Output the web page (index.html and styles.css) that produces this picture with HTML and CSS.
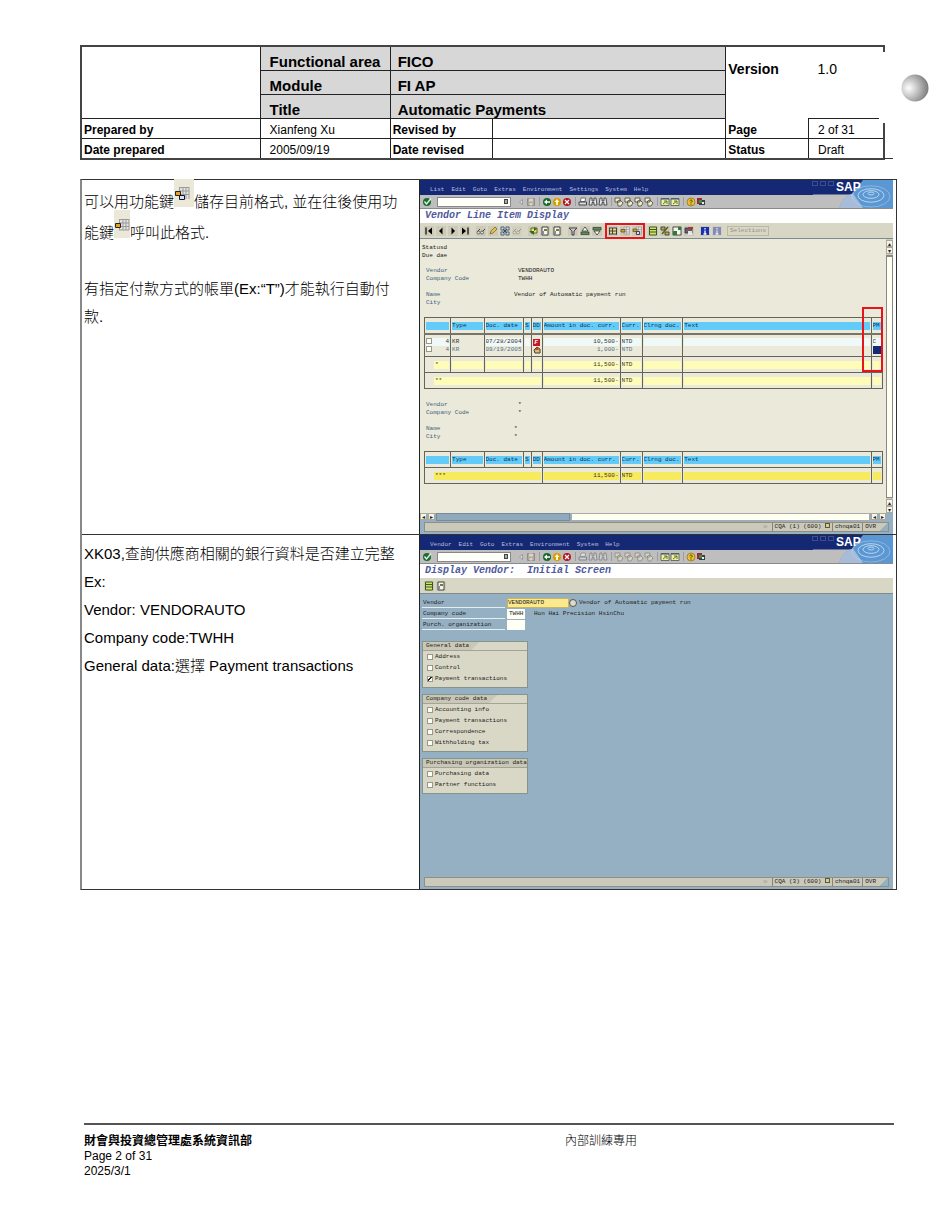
FILE: index.html
```html
<!DOCTYPE html>
<html lang="zh-Hant">
<head>
<meta charset="utf-8">
<title>FI AP Automatic Payments</title>
<link rel="stylesheet" href="styles.css">
</head>
<body>
<svg class="defs" aria-hidden="true">
  <symbol id="ok" viewBox="0 0 10 10"><circle cx="5" cy="5" r="4" fill="#1d6b34"/><path d="M2.5 4.5L4.5 7L9 1.5" stroke="#e8f6e8" stroke-width="1.3" fill="none"/></symbol>
  <symbol id="tri" viewBox="0 0 10 10"><path d="M6.5 2.5v5L3.5 5z" fill="#ddd" stroke="#8a8a8a" stroke-width=".7"/></symbol>
  <symbol id="save" viewBox="0 0 10 10"><path d="M1.5 1.5h7v7h-7z" fill="#b0a89c" stroke="#958d80"/><path d="M3 1.5h4v3H3zM3.5 6h3v2.5h-3z" fill="#d8d4cc"/></symbol>
  <symbol id="back" viewBox="0 0 10 10"><circle cx="5" cy="5" r="4" fill="#176a2b"/><path d="M2 5l3-2.5v1.7h3v1.6H5v1.7z" fill="#fff"/></symbol>
  <symbol id="exit" viewBox="0 0 10 10"><circle cx="5" cy="5" r="4" fill="#d99b00"/><path d="M5 2l2.5 3H6v3H4V5H2.5z" fill="#fff8c8"/></symbol>
  <symbol id="cancel" viewBox="0 0 10 10"><circle cx="5" cy="5" r="4" fill="#b51222"/><path d="M3 3l4 4M7 3L3 7" stroke="#fff" stroke-width="1.3"/></symbol>
  <symbol id="print" viewBox="0 0 10 10"><path d="M3 1h4.5L7 4.500H2.500z" fill="#fff" stroke="currentColor" stroke-width=".7"/><path d="M1 5h7.500v3H1z" fill="#ddd" stroke="currentColor"/></symbol>
  <symbol id="find" viewBox="0 0 10 10"><path d="M2 1h2v3h2V1h2l1 7H6V5.500H4V8H1z" fill="#e5e5ee" stroke="currentColor" stroke-width=".9"/></symbol>
  <symbol id="page" viewBox="0 0 10 10"><path d="M1 1h5v4H1zM3.500 4L6 3l3 3-2 3H4z" fill="#f3edc4" stroke="currentColor" stroke-width=".8"/></symbol>
  <symbol id="sess" viewBox="0 0 10 10"><path d="M1 1.500h8v7H1z" fill="#f2eda0" stroke="#4a5a50" stroke-width=".8"/><path d="M1 2h8" stroke="#31517c"/><path d="M3 7l4-3M4 4h3v3" stroke="#5c7a2c" fill="none"/></symbol>
  <symbol id="help" viewBox="0 0 10 10"><circle cx="5" cy="5" r="4" fill="#e8c233" stroke="#8c6b10" stroke-width=".7"/><path d="M3.500 4Q5 1.500 6.500 4L5 5.500v1M5 7.300v.8" stroke="#5b430c" fill="none"/></symbol>
  <symbol id="local" viewBox="0 0 10 10"><path d="M1 1h5v6H1z" fill="#a32638"/><path d="M3 3h6v5H3z" fill="#32434a"/><path d="M3 3h3v3H3z" fill="#3c9140"/><path d="M6 5h2v2H6z" fill="#eee"/></symbol>
  <symbol id="first" viewBox="0 0 10 10"><path d="M2 1.500v7" stroke="#111" stroke-width="1.300"/><path d="M8 1.500v7L4 5z"/></symbol>
  <symbol id="prev" viewBox="0 0 10 10"><path d="M6.500 1.500v7L3 5z"/></symbol>
  <symbol id="next" viewBox="0 0 10 10"><path d="M3.500 1.500v7L7 5z"/></symbol>
  <symbol id="last" viewBox="0 0 10 10"><path d="M8 1.500v7" stroke="#111" stroke-width="1.300"/><path d="M2 1.500v7L6 5z"/></symbol>
  <symbol id="glass" viewBox="0 0 10 10"><path d="M1 6l3-3M5 7l4-4" stroke="#444"/><circle cx="2.500" cy="6.500" r="1.500" fill="#ddd" stroke="#444" stroke-width=".7"/><circle cx="6" cy="6.500" r="1.500" fill="#ddd" stroke="#444" stroke-width=".7"/></symbol>
  <symbol id="pen" viewBox="0 0 10 10"><path d="M2 8l1-3 4-4 2 2-4 4z" fill="#e3c24b" stroke="#6a5a2a" stroke-width=".7"/></symbol>
  <symbol id="cross" viewBox="0 0 10 10"><path d="M1 1h3v3H1zM6 1h3v3H6zM1 6h3v3H1zM6 6h3v3H6z" fill="#c9d8e6" stroke="#35506b" stroke-width=".8"/><path d="M3 3l4 4M7 3L3 7" stroke="#35506b"/></symbol>
  <symbol id="grid" viewBox="0 0 10 10"><path d="M1 2h8v6H1z" fill="#e5dc8a"/><path d="M1 2h8M1 5h8M1 8h8M1.500 2v6.500M4.500 2v6M8.500 2v6.500" stroke="#333" stroke-width=".9"/></symbol>
  <symbol id="swap" viewBox="0 0 10 10"><path d="M3 2h6v5H3z" fill="#f1e05f" stroke="#4b4b20" stroke-width=".8"/><path d="M1 5h5v4z" fill="#256d31"/><path d="M6 1l3 2-3 2z" fill="#256d31"/></symbol>
  <symbol id="doc" viewBox="0 0 10 10"><path d="M2 1h6v8H2z" fill="#f6f6ec" stroke="#333" stroke-width=".9"/><path d="M4 3h3v2H4z" fill="#6d7d3b"/><path d="M1 5h3v3H1z" fill="#889"/></symbol>
  <symbol id="filter" viewBox="0 0 10 10"><path d="M1 2h8L6 5v4H4V5z" fill="#c8ccd0" stroke="#333" stroke-width=".9"/></symbol>
  <symbol id="asc" viewBox="0 0 10 10"><path d="M5 1l3 4H2z" fill="#fff" stroke="#333" stroke-width=".8"/><path d="M1 6h8v2.500H1z" fill="#529658" stroke="#333" stroke-width=".7"/></symbol>
  <symbol id="desc" viewBox="0 0 10 10"><path d="M1 1.500h8V4H1z" fill="#529658" stroke="#333" stroke-width=".7"/><path d="M2 5h6L5 9z" fill="#fff" stroke="#333" stroke-width=".8"/></symbol>
  <symbol id="lay" viewBox="0 0 10 10"><path d="M4 1h5.500v7H4zM4 3.500h5.500M4 6h5.500M6.500 1v7" fill="#e6e6e0" stroke="#999" stroke-width=".7"/><path d="M1 3.500h4v2.500H1z" fill="#dca02a" stroke="#3a3013" stroke-width=".6"/></symbol>
  <symbol id="laysave" viewBox="0 0 10 10"><path d="M4 1h5.500v7H4zM4 3.500h5.500M4 6h5.500M6.500 1v7" fill="#e6e6e0" stroke="#999" stroke-width=".7"/><path d="M1 3h4v2.500H1z" fill="#dca02a" stroke="#3a3013" stroke-width=".6"/><path d="M4.500 5.500h3v3h-3z" fill="#dde" stroke="#223" stroke-width=".8"/></symbol>
  <symbol id="sheet" viewBox="0 0 10 10"><path d="M1.500 1h7v8h-7z" fill="#cfe06a" stroke="#3c5a24"/><path d="M2 3.500h6M2 6h6" stroke="#3c5a24" stroke-width="1.200"/></symbol>
  <symbol id="link" viewBox="0 0 10 10"><path d="M1 1h4v3H1zM5 6h4v3H5z" fill="#c9a730" stroke="#333" stroke-width=".8"/><path d="M8 1L2 8" stroke="#46682f" stroke-width="1.500"/></symbol>
  <symbol id="xls" viewBox="0 0 10 10"><path d="M1 1h8v8H1z" fill="#f5f5f0" stroke="#333" stroke-width=".8"/><path d="M1 5h4v4H1zM6 1h3v3H6z" fill="#2d7a3c"/></symbol>
  <symbol id="mail" viewBox="0 0 10 10"><path d="M1 2h7v5H1z" fill="#665a78" stroke="#333" stroke-width=".8"/><path d="M4 5h4v4H4z" fill="#e6e6e6"/><path d="M4 1h5v2H4z" fill="#a33"/></symbol>
  <symbol id="info" viewBox="0 0 10 10"><path d="M1 1h8v8H1z" fill="currentColor"/><path d="M5 2v1.500M5 4.500V8M3.500 8h3" stroke="#fff" stroke-width="1.300"/></symbol>
  <symbol id="sap" viewBox="0 0 80 29" preserveAspectRatio="none"><path d="M0 15h60v14H0z" fill="#bebebe"/><path d="M26 29Q30 17 38 15L50 0h30v29z" fill="#5b97d2"/><path d="M26 29Q30 16 40 14L50 29z" fill="#b9c5da" opacity=".8"/><g fill="none" stroke="#c1dcf2" stroke-width=".9"><ellipse cx="58" cy="14" rx="3" ry="1.500"/><ellipse cx="58" cy="15" rx="8" ry="4"/><ellipse cx="58" cy="16" rx="13" ry="7"/><ellipse cx="58" cy="17" rx="19" ry="11" opacity=".5"/></g></symbol>
</svg>

<div class="page">
  <header class="head">
    <table class="info">
      <colgroup><col class="h1"><col class="h2"><col class="h3"><col class="h4"><col class="h5"><col class="h6"></colgroup>
      <tr><td rowspan="3"></td><th class="big key">Functional area</th><th class="big" colspan="2">FICO</th><th class="ver open" rowspan="3">Version</th><td class="ver pad open" rowspan="3">1.0</td></tr>
      <tr><th class="big key">Module</th><th class="big" colspan="2">FI AP</th></tr>
      <tr><th class="big key">Title</th><th class="big" colspan="2">Automatic Payments</th></tr>
      <tr><th>Prepared by</th><td class="pad">Xianfeng Xu</td><th>Revised by</th><td></td><th class="pg">Page</th><td class="pad">2 of 31</td></tr>
      <tr><th>Date prepared</th><td class="pad">2005/09/19</td><th>Date revised</th><td></td><th>Status</th><td class="pad">Draft</td></tr>
    </table>
    <div class="ballbox"><svg class="ball" viewBox="0 0 28 28"><defs><radialGradient id="bg" cx=".27" cy=".5" r=".75"><stop offset="0" stop-color="#fff"/><stop offset=".35" stop-color="#d0d0d0"/><stop offset="1" stop-color="#777"/></radialGradient></defs><circle cx="14" cy="14" r="13.500" fill="url(#bg)"/></svg></div>
  </header>

  <main>
    <section class="step">
      <div class="note">
        <p>可以用功能鍵<svg class="ic wide" viewBox="0 0 20 28"><path d="M0 0h20v28H0z" fill="#ebe8d8"/><path d="M5 8h10v12H5z" fill="#e4e4e4"/><path d="M5 8.500h10M5 12h10M5 15.500h10M5.500 8v10M9 8v12M12 8v12M15 8v12" stroke="#999"/><path d="M1.500 12.500h5v4h-5z" fill="#e5a020" stroke="#222"/><path d="M5.500 16.500h5v4h-5z" fill="#dde2f5" stroke="#113"/></svg>儲存目前格式, 並在往後使用功<br>能鍵<svg class="ic" viewBox="0 0 16 28"><path d="M0 0h16v28H0z" fill="#ebe8d8"/><path d="M5 9h10v11H5z" fill="#e4e4e4"/><path d="M5 9.500h10M5 13h10M5 16.500h10M5 20h10M5.500 9v11M9 9v11M12 9v11M15 9v11" stroke="#999"/><path d="M1.500 13.500h5v4h-5z" fill="#e5a020" stroke="#222"/></svg>呼叫此格式.</p>
        <p class="blank"></p>
        <p>有指定付款方式的帳單(Ex:“T”)才能執行自動付<br>款.</p>
      </div>
      <div class="shot">
        <div class="menu"><span>List</span><span>Edit</span><span>Goto</span><span>Extras</span><span>Environment</span><span>Settings</span><span>System</span><span>Help</span></div>
        <div class="brand"><svg><use href="#sap"/></svg><b>SAP</b></div><div class="winbtn"><i></i><i></i><i></i></div>
        <div class="std">
          <button aria-label="Enter"><svg><use href="#ok"/></svg></button><span class="cmd"><input aria-label="Command"><i></i></span>
          <button aria-label="Collapse"><svg><use href="#tri"/></svg></button><button aria-label="Save"><svg><use href="#save"/></svg></button><i class="sep"></i>
          <button aria-label="Back"><svg><use href="#back"/></svg></button><button aria-label="Exit"><svg><use href="#exit"/></svg></button><button aria-label="Cancel"><svg><use href="#cancel"/></svg></button><i class="sep"></i>
          <button aria-label="Print"><svg><use href="#print"/></svg></button><button aria-label="Find"><svg><use href="#find"/></svg></button><button aria-label="Find next"><svg><use href="#find"/></svg></button><i class="sep"></i>
          <button aria-label="First page"><svg><use href="#page"/></svg></button><button aria-label="Previous page"><svg><use href="#page"/></svg></button><button aria-label="Next page"><svg><use href="#page"/></svg></button><button aria-label="Last page"><svg><use href="#page"/></svg></button><i class="sep"></i>
          <button aria-label="New session"><svg><use href="#sess"/></svg></button><button aria-label="Shortcut"><svg><use href="#sess"/></svg></button><i class="sep"></i>
          <button aria-label="Help"><svg><use href="#help"/></svg></button><button aria-label="Layout"><svg><use href="#local"/></svg></button>
        </div>
        <h2>Vendor Line Item Display</h2>
        <div class="app">
          <span class="grp"><button aria-label="First"><svg><use href="#first"/></svg></button><button aria-label="Previous"><svg><use href="#prev"/></svg></button><button aria-label="Next"><svg><use href="#next"/></svg></button><button aria-label="Last"><svg><use href="#last"/></svg></button></span>
          <span class="grp"><button aria-label="Display"><svg><use href="#glass"/></svg></button><button aria-label="Change"><svg><use href="#pen"/></svg></button><button aria-label="Mass change"><svg><use href="#cross"/></svg></button><button class="dim" aria-label="Check"><svg><use href="#glass"/></svg></button></span>
          <span class="grp"><button aria-label="Switch"><svg><use href="#swap"/></svg></button><button aria-label="Document"><svg><use href="#doc"/></svg></button><button aria-label="Additional"><svg><use href="#doc"/></svg></button></span>
          <span class="grp"><button aria-label="Filter"><svg><use href="#filter"/></svg></button><button aria-label="Ascending"><svg><use href="#asc"/></svg></button><button aria-label="Descending"><svg><use href="#desc"/></svg></button></span>
          <span class="grp mark"><button aria-label="Change layout"><svg><use href="#grid"/></svg></button><button aria-label="Select layout"><svg><use href="#lay"/></svg></button><button aria-label="Save layout"><svg><use href="#laysave"/></svg></button></span>
          <span class="grp"><button aria-label="Sum"><svg><use href="#sheet"/></svg></button><button aria-label="Subtotal"><svg><use href="#link"/></svg></button><button aria-label="Spreadsheet"><svg><use href="#xls"/></svg></button><button aria-label="Mail"><svg><use href="#mail"/></svg></button></span>
          <span class="grp blue"><button aria-label="Info"><svg><use href="#info"/></svg></button><button class="dim" aria-label="Legend"><svg><use href="#info"/></svg></button></span>
          <button class="sel">Selections</button>
        </div>
        <div class="work">
          <div class="report">
            <p>Statusd<br>Due dae</p>
            <dl><dt>Vendor</dt><dd>VENDORAUTO</dd><dt>Company Code</dt><dd>TWHH</dd></dl>
            <dl class="near"><dt>Name</dt><dd>Vendor of Automatic payment run</dd><dt>City</dt><dd></dd></dl>
            <div class="listbox">
            <table class="list">
              <colgroup><col class="c1"><col class="c2"><col class="c3"><col class="c4"><col class="c5"><col class="c6"><col class="c7"><col class="c8"><col class="c9"><col class="c10"></colgroup>
              <tr class="hd"><th><b></b></th><th><b>Type</b></th><th><b>Doc. date</b></th><th><b>S</b></th><th><b>DD</b></th><th><b>Amount in doc. curr.</b></th><th><b>Curr.</b></th><th><b>Clrng doc.</b></th><th><b>Text</b></th><th><b>PM</b></th></tr>
              <tr class="r1"><td><b class="r"><input type="checkbox" aria-label="Item 1">4</b></td><td><b>KR</b></td><td><b>07/28/2004</b></td><td><b></b></td><td><i class="due">F</i></td><td><b class="r">10,500-</b></td><td><b>NTD</b></td><td><b></b></td><td><b></b></td><td><b>C</b></td></tr>
              <tr class="r2"><td><b class="r"><input type="checkbox" aria-label="Item 2">4</b></td><td><b>KR</b></td><td><b>09/19/2005</b></td><td></td><td><svg class="clock" viewBox="0 0 8 8"><path d="M1 4l3-3 3 2v4H2z" fill="#e0bb72" stroke="#4c3826"/><path d="M4 1l2 3H2z" fill="#b44"/></svg></td><td><b class="r">1,000-</b></td><td><b>NTD</b></td><td></td><td></td><td><b class="navy"></b></td></tr>
              <tr class="t"><td><b class="in">*</b></td><td><b></b></td><td><b></b></td><td><b></b></td><td><b></b></td><td><b class="r">11,500-</b></td><td><b>NTD</b></td><td><b></b></td><td><b></b></td><td><b></b></td></tr>
              <tr class="t"><td colspan="5"><b class="in">**</b></td><td><b class="r">11,500-</b></td><td><b>NTD</b></td><td><b></b></td><td><b></b></td><td><b></b></td></tr>
            </table><div class="redbox"></div></div>
            <dl><dt>Vendor</dt><dd>*</dd><dt>Company Code</dt><dd>*</dd></dl>
            <dl class="near"><dt>Name</dt><dd>*</dd><dt>City</dt><dd>*</dd></dl>
            <div class="listbox">
            <table class="list">
              <colgroup><col class="c1"><col class="c2"><col class="c3"><col class="c4"><col class="c5"><col class="c6"><col class="c7"><col class="c8"><col class="c9"><col class="c10"></colgroup>
              <tr class="hd"><th><b></b></th><th><b>Type</b></th><th><b>Doc. date</b></th><th><b>S</b></th><th><b>DD</b></th><th><b>Amount in doc. curr.</b></th><th><b>Curr.</b></th><th><b>Clrng doc.</b></th><th><b>Text</b></th><th><b>PM</b></th></tr>
              <tr class="t tt"><td colspan="5"><b class="in">***</b></td><td><b class="r">11,500-</b></td><td><b>NTD</b></td><td><b></b></td><td><b></b></td><td><b></b></td></tr>
            </table></div>
          </div>
          <div class="vbar"><i>▴</i><i>▾</i><span></span><i>▴</i><i>▾</i></div>
        </div>
        <div class="hbar"><i>◂</i><i>▸</i><span class="thumb"></span><span class="track"></span><i>◂</i><i>▸</i></div>
        <div class="status"><span class="arrow">▷</span><span class="cell">CQA (1) (600) <i></i></span><span class="cell">chnqa01</span><span class="cell">OVR</span><span class="grip"></span></div>
      </div>
    </section>

    <section class="step">
      <div class="note">
        <p>XK03,查詢供應商相關的銀行資料是否建立完整<br>Ex:<br>Vendor: VENDORAUTO<br>Company code:TWHH<br>General data:選擇 Payment transactions</p>
      </div>
      <div class="shot">
        <div class="menu"><span>Vendor</span><span>Edit</span><span>Goto</span><span>Extras</span><span>Environment</span><span>System</span><span>Help</span></div>
        <div class="brand"><svg><use href="#sap"/></svg><b>SAP</b></div><div class="winbtn"><i></i><i></i><i></i></div>
        <div class="std">
          <button aria-label="Enter"><svg><use href="#ok"/></svg></button><span class="cmd"><input aria-label="Command"><i></i></span>
          <button aria-label="Collapse"><svg><use href="#tri"/></svg></button><button aria-label="Save"><svg><use href="#save"/></svg></button><i class="sep"></i>
          <button aria-label="Back"><svg><use href="#back"/></svg></button><button aria-label="Exit"><svg><use href="#exit"/></svg></button><button aria-label="Cancel"><svg><use href="#cancel"/></svg></button><i class="sep"></i>
          <button class="dim" aria-label="Print"><svg><use href="#print"/></svg></button><button class="dim" aria-label="Find"><svg><use href="#find"/></svg></button><button class="dim" aria-label="Find next"><svg><use href="#find"/></svg></button><i class="sep"></i>
          <button class="dim" aria-label="First page"><svg><use href="#page"/></svg></button><button class="dim" aria-label="Previous page"><svg><use href="#page"/></svg></button><button class="dim" aria-label="Next page"><svg><use href="#page"/></svg></button><button class="dim" aria-label="Last page"><svg><use href="#page"/></svg></button><i class="sep"></i>
          <button aria-label="New session"><svg><use href="#sess"/></svg></button><button aria-label="Shortcut"><svg><use href="#sess"/></svg></button><i class="sep"></i>
          <button aria-label="Help"><svg><use href="#help"/></svg></button><button aria-label="Layout"><svg><use href="#local"/></svg></button>
        </div>
        <h2>Display Vendor:&nbsp; Initial Screen</h2>
        <div class="app"><span class="grp"><button aria-label="Other vendor"><svg><use href="#sheet"/></svg></button><button aria-label="Administrative data"><svg><use href="#doc"/></svg></button></span></div>
        <div class="form">
          <div class="row"><label for="v">Vendor</label><input id="v" class="key" value="VENDORAUTO"><button class="f4" aria-label="Search vendor"></button><span>Vendor of Automatic payment run</span></div>
          <div class="row"><label for="cc">Company code</label><input id="cc" value="TWHH"><span class="co">Hon Hai Precision HsinChu</span></div>
          <div class="row"><label for="po">Purch. organization</label><input id="po"></div>
          <div class="box first"><h3><span>General data</span></h3>
            <label><input type="checkbox">Address</label><label><input type="checkbox">Control</label><label><input type="checkbox" checked>Payment transactions</label></div>
          <div class="box"><h3><span>Company code data</span></h3>
            <label><input type="checkbox">Accounting info</label><label><input type="checkbox">Payment transactions</label><label><input type="checkbox">Correspondence</label><label><input type="checkbox">Withholding tax</label></div>
          <div class="box"><h3 class="full"><span>Purchasing organization data</span></h3>
            <label><input type="checkbox">Purchasing data</label><label><input type="checkbox">Partner functions</label></div>
        </div>
        <div class="status"><span class="arrow">▷</span><span class="cell">CQA (3) (600) <i></i></span><span class="cell">chnqa01</span><span class="cell">OVR</span><span class="grip"></span></div>
      </div>
    </section>
  </main>

  <footer>
    <div><b>財會與投資總管理處系統資訊部</b><br>Page 2 of 31<br>2025/3/1</div>
    <div class="use">內部訓練專用</div>
  </footer>
</div>
</body>
</html>
```

FILE: styles.css
```css
* { box-sizing: border-box; }
body { margin: 0; background: #fff; color: #000; font-family: "Liberation Sans", "Noto Sans CJK TC", sans-serif; }
p, h2, h3, dl, dd { margin: 0; }
button, input { font: inherit; color: inherit; margin: 0; padding: 0; border: 0; background: none; }
.defs { display: none; }
.page { min-height: 100vh; padding: 45px 53px 51px 80px; display: flex; flex-direction: column; }

/* document header */
.head { position: relative; padding-right: 12px; margin-bottom: 19px; }
.head::after { content: ""; position: absolute; right: 4px; bottom: 1px; width: 9px; height: 1px; background: #333; }
.info { width: 100%; table-layout: fixed; border-collapse: collapse; border: 2px solid #444; font-size: 12px; }
.h1 { width: 22.3%; } .h2 { width: 16.2%; } .h3 { width: 12.7%; } .h4 { width: 29.1%; } .h5 { width: 10.3%; } .h6 { width: 9.4%; }
.info th, .info td { height: 20px; padding: 3px 0 0 2px; line-height: 16px; text-align: left; border: 1px solid #222; white-space: nowrap; }
.info th, .info td { border-color: #222; }
.info tr:first-child > * { border-top: 2px solid #444; }
.info tr:last-child > * { border-bottom: 2px solid #444; }
.info tr > td:first-child, .info tr:nth-child(n+4) > th:first-child { border-left: 2px solid #444; }
.info .big { height: 24px; padding: 6px 0 0 7px; line-height: 17px; font-size: 15px; background: #d7d7d7; }
.info .pad, .info .key { padding-left: 9px; }
.info .ver { font-size: 14px; vertical-align: top; padding-top: 14px; }
.info th.open { border-right: 0; border-bottom: 0; }
.info td.open { border-left: 0; }
.info .pg { border-top: 0; }
.ballbox { position: absolute; top: 7px; right: -53px; width: 71px; height: 71px; background: #fff; display: grid; place-items: center; }
.ball { width: 28px; height: 28px; }

/* steps */
main { border: 1px solid #333; border-left: 2px solid #888; }
.step { display: grid; grid-template-columns: 338px 1fr; }
.step + .step { border-top: 1px solid #333; }
.note { padding: 5px 0 0 2px; font-size: 15px; font-weight: 300; line-height: 28px; border-right: 1px solid #222; white-space: nowrap; }
.note .blank { height: 28px; }
.ic { width: 16px; height: 28px; margin-top: -6px; vertical-align: baseline; }
.ic.wide { width: 20px; }

/* application window */
.shot { position: relative; display: flex; flex-direction: column; min-height: 354px; margin-right: 3px; font: 6px/8px "Liberation Mono", monospace; color: #222; background: #95b0c3; white-space: nowrap; overflow: hidden; }
.menu { height: 15px; padding: 6px 0 0 10px; display: flex; gap: 7px; background: #152874; color: #b8bfdf; }
.brand { position: absolute; top: 0; right: 0; width: 80px; height: 28px; }
.brand svg { width: 80px; height: 28px; display: block; }
.brand b { position: absolute; top: 1px; left: 23px; color: #fff; font: bold 12px/13px "Liberation Sans", sans-serif; }
.winbtn { position: absolute; top: 1px; right: 59px; display: flex; gap: 2px; }
.winbtn i { width: 6px; height: 5px; border: 1px solid #3e4d8e; }
.std { height: 14px; padding-left: 2px; display: flex; align-items: center; background: #bebebe; border-bottom: 1px solid #8a8a8a; color: #444; }
.std button { width: 10px; height: 10px; }
.std svg, .app svg { width: 10px; height: 10px; display: block; }
.cmd { width: 74px; height: 10px; margin: 0 6px 0 5px; display: flex; align-items: center; background: #fffffa; border: 1px solid #888; }
.cmd input { width: 66px; height: 8px; }
.cmd i { width: 4px; height: 5px; background: #aaa; border: 1px solid #444; }
.std .cmd + button { margin-left: -1px; }
.sep { width: 1px; height: 9px; margin: 0 2px 0 3px; background: #9c9c9c; }
.dim { opacity: .45; }
.shot h2 { height: 14px; padding-left: 5px; background: #fff; color: #4f5a9c; font: italic bold 10px/14px "Liberation Mono", monospace; white-space: pre; }
.app { height: 16px; padding-left: 3px; display: flex; align-items: center; gap: 4px; background: #d8d6c4; border-bottom: 1px solid #7d8b90; }
.grp { display: flex; gap: 2px; padding: 1px; }
.grp svg { background: #ccc9b6; }
.grp button { width: 10px; height: 10px; }
.mark { outline: 2px solid #e8141c; outline-offset: 0; }
.blue { color: #1a30b0; }
.sel { height: 10px; padding: 0 2px; border: 1px solid #bbb8a4; color: #96947f; }
.work { flex: 1; display: flex; background: #ebe9d9; }
.report { flex: 1; min-width: 0; padding: 5px 3px 0 2px; }
.report dl { display: grid; grid-template-columns: 92px 1fr; grid-auto-rows: 8px; margin: 7px 0 0 4px; }
.report .near { grid-template-columns: 88px 1fr; margin-top: 8px; }
.report dt { color: #3d6283; }
.listbox { position: relative; margin: 10px 0 12px 2px; }
.list { width: 100%; table-layout: fixed; border-collapse: collapse; border: 1px solid #666358; color: #333; }
.c1 { width: 5.7%; } .c2 { width: 7.3%; } .c3 { width: 8.7%; } .c4 { width: 1.6%; } .c5 { width: 2.4%; } .c6 { width: 17%; } .c7 { width: 4.8%; } .c8 { width: 8.9%; } .c9 { width: 41.1%; } .c10 { width: 2.5%; }
.list th, .list td { padding: 4px 1px 3px; border: 1px solid #666358; text-align: left; }
.list b { display: block; height: 8px; font-weight: normal; overflow: hidden; }
.hd b { background: #62cbfa; color: #12304a; }
.list .r1 td { padding: 3px 1px 0; border-bottom: 0; border-top: 2px solid #77746a; }
.list .r2 td { padding-top: 0; padding-bottom: 2px; border-top: 0; }
.r1 b { background: #f1f9f8; }
.list .r1 td:nth-child(2) b { background: none; }
.r2 { color: #54708a; }
.t b { background: #fffcb8; }
.tt b { background: #f8ea5d; }
.list .in { margin-left: 8px; padding-left: 1px; }
.list .r { text-align: right; }
.list input { float: left; }
.due { display: block; width: 7px; height: 7px; background: #c4182a; color: #fff; font-weight: bold; line-height: 7px; text-align: center; }
.clock { display: block; width: 8px; height: 8px; }
.list .navy { background: #142b74; }
.redbox { position: absolute; top: -10px; right: 0; width: 21px; height: 65px; border: 2px solid #e8141c; }
input[type="checkbox"] { appearance: none; width: 6px; height: 6px; background: #fffffa; border: 1px solid #99978a; }
input[type="checkbox"]:checked { background: linear-gradient(135deg, #fff 35%, #222 36% 60%, #fff 61%); }
.vbar { width: 7px; padding-top: 1px; display: flex; flex-direction: column; background: #d0cec0; }
.vbar i, .hbar i { width: 7px; height: 7px; background: #f6f5ea; border: 1px solid #aaa897; font: 6px/5px "DejaVu Sans", sans-serif; text-align: center; overflow: hidden; }
.vbar span { flex: 1; margin: 1px 0; background: #fffff2; border: 1px solid #888; border-top-width: 2px; }
.hbar { height: 8px; padding-right: 7px; display: flex; gap: 1px; }
.thumb { flex: 0 0 134px; background: #91a9bb; border: 1px solid #768b9c; }
.track { flex: 1; background: #fffff2; border: 1px solid #aaa; }
.status { height: 10px; margin: 1px 4px 2px; display: flex; justify-content: flex-end; background: #cbc9b9; border: 1px solid #918f82; }
.cell { padding: 0 2px 0 2px; border-left: 1px solid #85837a; }
.cell i { display: inline-block; width: 5px; height: 5px; background: #ded06a; border: 1px solid #555; }
.arrow { padding-right: 4px; color: #888; }
.grip { width: 10px; background: linear-gradient(135deg, #cbc9b9 50%, #95b0c3 51%); }

/* selection form */
.form { flex: 1; padding: 3px 0 0 2px; }
.row { display: flex; height: 11px; align-items: center; }
.row label { width: 83px; margin-right: 2px; height: 10px; line-height: 10px; padding-left: 1px; border-bottom: 1px solid #e6edf0; }
.row input { width: 18px; height: 10px; padding-left: 2px; background: #fffff4; }
.row .key { width: 62px; padding-left: 0; background: #fbe98f; border: 1px solid #c9b55d; }
.f4 { width: 8px; height: 8px; margin-right: 2px; border: 1px solid #555; border-radius: 4px; background: #dcdac8; }
.co { margin-left: 9px; }
.box { width: 106px; margin-bottom: 6px; padding-bottom: 3px; background: #d9d7c6; border: 1px solid #88938c; }
.box.first { margin-top: 11px; }
.box h3 { height: 9px; font: inherit; line-height: 8px; border-bottom: 1px solid #a5a395; }
.box h3 span { display: inline-block; height: 8px; padding: 0 10px 0 3px; background: #c9c7b6; clip-path: polygon(0 0, 100% 0, calc(100% - 8px) 100%, 0 100%); }
.box h3.full span { padding-right: 0; clip-path: none; }
.box label { display: flex; align-items: center; gap: 2px; height: 11px; padding-left: 4px; }

/* document footer */
footer { margin: auto 3px 0 4px; padding-top: 9px; display: grid; grid-template-columns: 481px 1fr; border-top: 2px solid #555; font-size: 12px; line-height: 15px; }
.use { font-weight: 300; }
```
